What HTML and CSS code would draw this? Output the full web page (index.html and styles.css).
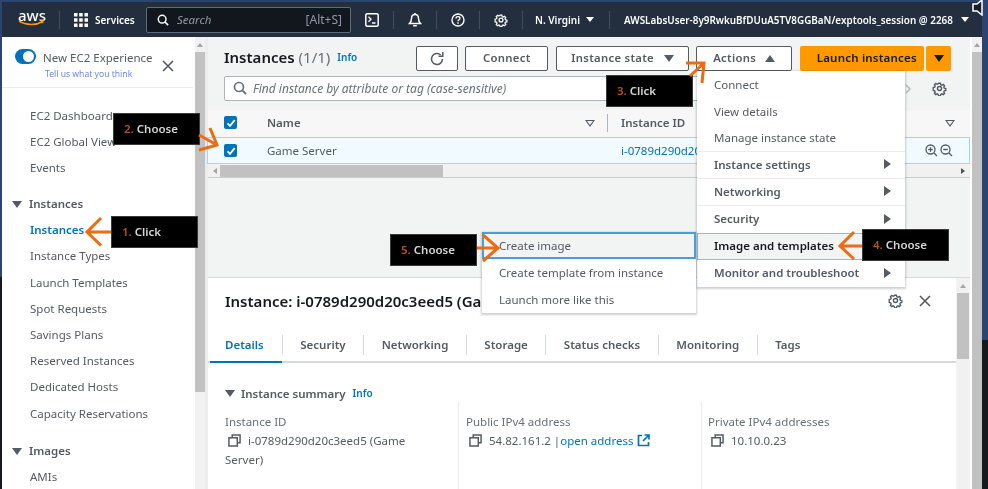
FILE: index.html
```html
<!DOCTYPE html>
<html lang="en">
<head>
    <meta charset="UTF-8" />
    <meta name="viewport" content="width=device-width, initial-scale=1" />
    <title>Instances | EC2 Management Console</title>
    <link rel="stylesheet" href="styles.css">
</head>
<body>
<svg class="defs" width="0" height="0">
    <symbol id="i-copy" viewBox="0 0 14 14"><path d="M4.5 3.5V1h8.500v8.500H10M1 4h9v9H1z" fill="none" stroke="currentColor" stroke-width="1.600"/></symbol>
    <symbol id="i-gear" viewBox="0 0 16 16"><path d="M6.700 1h2.600l.4 2 1.500.7 1.800-1.100 1.800 1.800-1.100 1.800.7 1.500 2 .4v2.600l-2 .4-.7 1.500 1.100 1.800-1.800 1.800-1.800-1.100-1.500.7-.4 2H6.700l-.4-2-1.500-.7-1.800 1.100-1.800-1.800 1.100-1.800-.7-1.500-2-.4V6.700l2-.4.7-1.500-1.100-1.800 1.800-1.800 1.800 1.100 1.500-.7z" transform="translate(1.600 1.600) scale(.8)" fill="none" stroke="currentColor" stroke-width="1.800"/><circle cx="8" cy="8" r="2.200" fill="none" stroke="currentColor" stroke-width="1.500"/></symbol>
    <symbol id="i-search" viewBox="0 0 14 14"><circle cx="6" cy="6" r="4.500" fill="none" stroke="currentColor" stroke-width="1.700"/><path d="M9.300 9.300 13 13" stroke="currentColor" stroke-width="1.900"/></symbol>
    <symbol id="i-x" viewBox="0 0 12 12"><path d="M1 1l10 10M11 1 1 11" stroke="currentColor" stroke-width="1.600"/></symbol>
    <symbol id="i-check" viewBox="0 0 12 12"><path d="M2.500 6.300 5 8.800l4.700-5.600" fill="none" stroke="#fff" stroke-width="1.800"/></symbol>
</svg>

<div class="page">
    <header class="topbar">
        <div class="aws-logo"><span>aws</span>
            <svg width="27" height="6" viewBox="0 0 27 6"><path d="M1 1c7 4.500 17 4.500 24 .5" fill="none" stroke="#f90" stroke-width="1.500"/><path d="M22 .5l4-.5-1 3.500z" fill="#f90"/></svg>
        </div>
        <span class="top-sep sep-logo"></span>
        <svg class="grid-icon" width="14" height="14" viewBox="0 0 14 14" fill="#fff"><path d="M0 0h3.500v3.500H0zM5.200 0h3.500v3.500H5.200zM10.500 0H14v3.500h-3.500zM0 5.200h3.500v3.500H0zM5.200 5.200h3.500v3.500H5.200zM10.500 5.200H14v3.500h-3.500zM0 10.500h3.500V14H0zM5.200 10.500h3.500V14H5.200zM10.500 10.500H14V14h-3.500z"/></svg>
        <span class="services">Services</span>
        <div class="top-search">
            <svg class="top-search-icon" width="12" height="12"><use href="#i-search"/></svg>
            <span class="top-search-text">Search</span>
            <span class="top-search-key">[Alt+S]</span>
        </div>
        <svg class="top-icon" width="14" height="14" viewBox="0 0 14 14"><rect x=".8" y=".8" width="12.400" height="12.400" rx="1.500" fill="none" stroke="#fff" stroke-width="1.500"/><path d="M3.500 3.800 6 6.300 3.500 8.800M7 10h3.500" fill="none" stroke="#fff" stroke-width="1.300"/></svg>
        <span class="top-sep"></span>
        <svg class="top-icon" width="14" height="14" viewBox="0 0 14 14"><path d="M7 1.500c-2.500 0-3.500 1.800-3.500 4 0 2.500-.7 3.700-2 5h11c-1.300-1.300-2-2.500-2-5 0-2.200-1-4-3.500-4z" fill="none" stroke="#fff" stroke-width="1.500"/><path d="M5.200 12h3.600v1.500H5.200zM6.200 0h1.600v2H6.200z" fill="#fff"/></svg>
        <span class="top-sep"></span>
        <svg class="top-icon" width="14" height="14" viewBox="0 0 14 14"><circle cx="7" cy="7" r="6" fill="none" stroke="#fff" stroke-width="1.400"/><path d="M5 5.400C5 4.200 5.900 3.600 7 3.600s2 .7 2 1.700c0 1.400-2 1.500-2 3" fill="none" stroke="#fff" stroke-width="1.300"/><path d="M6.300 9.300h1.400v1.400H6.300z" fill="#fff"/></svg>
        <span class="top-sep"></span>
        <svg class="top-icon top-gear" width="14" height="14"><use href="#i-gear"/></svg>
        <span class="top-sep"></span>
        <span class="region">N. Virgini</span><span class="caret-w"></span>
        <span class="top-sep sep-region"></span>
        <span class="account">AWSLabsUser-8y9RwkuBfDUuA5TV8GGBaN/exptools_session @ 2268</span><span class="caret-w"></span>
    </header>

    <div class="workspace">
        <aside class="sidebar">
            <div class="experience">
                <span class="toggle"></span>
                <div class="experience-text">
                    <div class="experience-title">New EC2 Experience</div>
                    <a class="experience-link">Tell us what you think</a>
                </div>
                <svg class="experience-close" width="12" height="12"><use href="#i-x"/></svg>
            </div>
            <nav class="nav">
                <a>EC2 Dashboard</a>
                <a>EC2 Global View</a>
                <a>Events</a>
                <div class="nav-head"><i class="tri-down"></i>Instances</div>
                <a class="active">Instances</a>
                <a>Instance Types</a>
                <a>Launch Templates</a>
                <a>Spot Requests</a>
                <a>Savings Plans</a>
                <a>Reserved Instances</a>
                <a>Dedicated Hosts</a>
                <a>Capacity Reservations</a>
                <div class="nav-head nav-head-images"><i class="tri-down"></i>Images</div>
                <a>AMIs</a>
            </nav>
        </aside>
        <div class="scrollbar side-scroll"><i class="scroll-up"></i><b></b></div>

        <main class="content">
            <section class="upper">
                <div class="title-row">
                    <h1>Instances <span class="count">(1/1)</span></h1>
                    <a class="info">Info</a>
                    <button class="btn btn-refresh"><svg width="16" height="16" viewBox="0 0 16 16"><path d="M13.500 8a5.500 5.500 0 1 1-1.800-4.100" fill="none" stroke="#545b64" stroke-width="1.500"/><path d="M13.800 1v4.200H9.600" fill="none" stroke="#545b64" stroke-width="1.500"/></svg></button>
                    <button class="btn btn-connect">Connect</button>
                    <button class="btn btn-state">Instance state <i class="tri-down big"></i></button>
                    <button class="btn btn-actions">Actions <i class="tri-up"></i></button>
                    <div class="launch">
                        <button class="launch-main">Launch instances</button>
                        <button class="launch-arrow"><i class="tri-down big dark"></i></button>
                    </div>
                </div>
                <div class="search-row">
                    <div class="find">
                        <svg width="14" height="14"><use href="#i-search"/></svg>
                        <span>Find instance by attribute or tag (case-sensitive)</span>
                    </div>
                    <svg class="pager" width="6" height="10" viewBox="0 0 6 10"><path d="M1 1l4 4-4 4" fill="none" stroke="#aab7b8" stroke-width="1.400"/></svg>
                    <svg class="search-gear" width="15" height="15"><use href="#i-gear"/></svg>
                </div>
                <div class="table">
                    <div class="table-head">
                        <span class="check"><svg width="12" height="12"><use href="#i-check"/></svg></span>
                        <span class="col-name">Name</span>
                        <i class="filter"></i>
                        <span class="col-id">Instance ID</span>
                        <i class="filter filter-end"></i>
                    </div>
                    <div class="table-row">
                        <span class="check"><svg width="12" height="12"><use href="#i-check"/></svg></span>
                        <span class="col-name">Game Server</span>
                        <a class="col-id-link">i-0789d290d20c3eed5</a>
                        <svg class="zoom-icons" width="28" height="13" viewBox="0 0 28 13"><g fill="none" stroke="#545b64" stroke-width="1.300"><circle cx="5.500" cy="5.500" r="4.500"/><path d="M9 9l3 3M3.300 5.500h4.400M5.500 3.300v4.400"/><circle cx="20.500" cy="5.500" r="4.500"/><path d="M24 9l3 3M18.300 5.500h4.400"/></g></svg>
                    </div>
                    <div class="h-scroll"><i class="scroll-left"></i><b></b><i class="scroll-right"></i></div>
                </div>
            </section>

            <div class="lower-wrap">
                <section class="lower">
                    <div class="lower-head">
                        <h2>Instance: i-0789d290d20c3eed5 (Game Server)</h2>
                        <svg class="lower-gear" width="15" height="15"><use href="#i-gear"/></svg>
                        <svg class="lower-close" width="12" height="12"><use href="#i-x"/></svg>
                    </div>
                    <div class="tabs">
                        <a class="tab selected">Details</a>
                        <a class="tab">Security</a>
                        <a class="tab">Networking</a>
                        <a class="tab">Storage</a>
                        <a class="tab">Status checks</a>
                        <a class="tab">Monitoring</a>
                        <a class="tab last">Tags</a>
                    </div>
                    <div class="summary-head"><i class="tri-down"></i>Instance summary <a class="info">Info</a></div>
                    <div class="summary">
                        <div class="field">
                            <label>Instance ID</label>
                            <p><svg class="copy" width="13" height="13"><use href="#i-copy"/></svg>i-0789d290d20c3eed5 (Game Server)</p>
                        </div>
                        <div class="field">
                            <label>Public IPv4 address</label>
                            <p><svg class="copy" width="13" height="13"><use href="#i-copy"/></svg>54.82.161.2 |<a class="link">open address</a>
                                <svg class="ext" width="13" height="13" viewBox="0 0 13 13"><path d="M5 1.500H1.500v10h10V8M7.500 1H12v4.500M12 1 6 7" fill="none" stroke="#0073bb" stroke-width="1.700"/></svg></p>
                        </div>
                        <div class="field">
                            <label>Private IPv4 addresses</label>
                            <p><svg class="copy" width="13" height="13"><use href="#i-copy"/></svg>10.10.0.23</p>
                        </div>
                        <div class="field field-next"><label>IPv6 address</label></div>
                        <div class="field field-next"><label>Instance state</label></div>
                        <div class="field field-next"><label>Public IPv4 DNS</label></div>
                    </div>
                </section>
                <div class="scrollbar lower-scroll"><i class="scroll-up"></i><b></b></div>
            </div>
        </main>
        <div class="scrollbar main-scroll"><i class="scroll-up"></i><b></b></div>
    </div>

    <!-- actions menu -->
    <div class="menu actions-menu">
        <a>Connect</a>
        <a>View details</a>
        <a class="rule-after">Manage instance state</a>
        <a class="strong rule-after">Instance settings<i class="tri-right"></i></a>
        <a class="strong rule-after">Networking<i class="tri-right"></i></a>
        <a class="strong">Security<i class="tri-right"></i></a>
        <a class="strong picked">Image and templates<i class="tri-right"></i></a>
        <a class="strong">Monitor and troubleshoot<i class="tri-right"></i></a>
    </div>
    <div class="menu image-menu">
        <a class="focused">Create image</a>
        <a>Create template from instance</a>
        <a>Launch more like this</a>
    </div>

    <!-- walkthrough callouts -->
    <div class="callout step-1"><em>1.</em> Click</div>
    <div class="callout step-2"><em>2.</em> Choose</div>
    <div class="callout step-3"><em>3.</em> Click</div>
    <div class="callout step-4"><em>4.</em> Choose</div>
    <div class="callout step-5"><em>5.</em> Choose</div>
    <svg class="arrows" width="988" height="489" viewBox="0 0 988 489" fill="none" stroke="#ee6b10" stroke-width="3">
        <path d="M111 232H88M101 218 87 232l14 13.500"/>
        <path d="M199 135l18 10M210 128l7 17-18 5"/>
        <path d="M686 63h18l-2 20M704 63 690 76"/>
        <path d="M862 246h-21M854 232l-14 14 14 13"/>
        <path d="M477 248h20M483 235l15 13-15 13"/>
    </svg>
    <svg class="speaker" width="16" height="16" viewBox="0 0 16 16"><path d="M1 4h4l5-4v15L5 11H1z" fill="#15202b" stroke="#fff" stroke-width="1.500"/></svg>
</div>
</body>
</html>
```

FILE: styles.css
```css
* {
    box-sizing: border-box;
}

html, body {
    margin: 0;
    height: 100%;
    overflow: hidden;
}

body {
    font-family: "Noto Sans", Arial, sans-serif;
    font-size: 11.500px;
    color: #545b64;
    background: #2b4570;
}

h1, h2, p {
    margin: 0;
}

a {
    text-decoration: none;
}

i {
    display: inline-block;
}

.defs {
    position: absolute;
}

.page {
    position: relative;
    width: 988px;
    height: 489px;
    padding: 2px 6px 0 2px;
    overflow: hidden;
    filter: blur(0.45px);
    background:
        linear-gradient(#2b4570 277px, #15181c 277px) left / 2px 100% no-repeat,
        linear-gradient(#2b4570 340px, #15181c 340px) right / 6px 100% no-repeat,
        #2b4570;
}

/* triangles */
.tri-down {
    width: 0;
    height: 0;
    border-left: 5px solid transparent;
    border-right: 5px solid transparent;
    border-top: 7px solid #545b64;
}

.tri-up {
    width: 0;
    height: 0;
    border-left: 5px solid transparent;
    border-right: 5px solid transparent;
    border-bottom: 7px solid #545b64;
}

.tri-down.dark {
    border-top-color: #16191f;
}

.tri-right {
    width: 0;
    height: 0;
    border-top: 5px solid transparent;
    border-bottom: 5px solid transparent;
    border-left: 7px solid #545b64;
    margin-left: auto;
}

/* top bar */
.topbar {
    display: flex;
    align-items: center;
    height: 35px;
    background: #232f3e;
    color: #fff;
    font-size: 10px;
    font-weight: 600;
    padding-left: 16px;
}

.aws-logo {
    width: 27px;
    line-height: 9px;
    font-size: 15px;
    font-weight: 500;
    text-align: center;
    margin-top: -3px;
}

.aws-logo svg {
    display: block;
}

.top-sep {
    width: 1px;
    height: 18px;
    background: #414d5c;
    margin: 0 14px;
}

.services {
    margin-left: 7px;
    width: 51px;
}

.top-search {
    display: flex;
    align-items: center;
    width: 205px;
    height: 26px;
    background: #12171e;
    border: 1px solid #5f6b7a;
    border-radius: 2px;
    padding: 0 8px 0 10px;
    margin-right: 14px;
    color: #8d99a8;
    font-weight: 400;
    font-size: 11.500px;
}

.top-search-icon {
    color: #fff;
}

.top-search-text {
    font-style: italic;
    margin-left: 8px;
}

.top-search-key {
    margin-left: auto;
    font-size: 12px;
}

.region {
    margin-left: -2px;
}

.caret-w {
    width: 0;
    height: 0;
    border-left: 4px solid transparent;
    border-right: 4px solid transparent;
    border-top: 5px solid #fff;
    margin-left: 6px;
}

.sep-region {
    margin: 0 14px 0 15px;
}

.account {
    white-space: nowrap;
    width: 331px;
    font-size: 9.900px;
}

/* main areas */
.workspace {
    display: flex;
    height: 452px;
    background: #fff;
}

.sidebar {
    width: 191px;
    flex: none;
    background: #fff;
}

.experience {
    position: relative;
    display: flex;
    height: 51px;
    padding: 13px 0 0 13px;
    border-bottom: 1px solid #eaeded;
}

.toggle {
    position: relative;
    width: 21px;
    height: 15px;
    margin-top: -1px;
    border-radius: 8px;
    background: #0073bb;
}

.toggle::after {
    content: "";
    position: absolute;
    right: 2px;
    top: 2px;
    width: 11px;
    height: 11px;
    border-radius: 50%;
    background: #fff;
}

.experience-text {
    margin-left: 7px;
}

.experience-title {
    line-height: 16px;
    white-space: nowrap;
}

.experience-link {
    display: block;
    font-size: 8.600px;
    line-height: 14px;
    margin: 1px 0 0 2px;
    color: #6b8ae0;
    white-space: nowrap;
}

.experience-close {
    position: absolute;
    left: 160px;
    top: 23px;
    color: #545b64;
}

.nav {
    padding-top: 15px;
}

.nav a,
.nav-head {
    display: block;
    line-height: 26.200px;
    height: 26.200px;
    padding-left: 28px;
    white-space: nowrap;
}

.nav a.active {
    color: #0073bb;
    font-weight: 600;
}

.nav-head {
    position: relative;
    margin-top: 9.500px;
    padding-left: 27px;
    font-weight: 600;
}

.nav-head-images {
    margin-top: 11.500px;
}

.nav-head .tri-down {
    position: absolute;
    left: 10px;
    top: 10px;
}

.scrollbar {
    position: relative;
    flex: none;
    width: 10px;
    background: #f1f1f1;
}

.scrollbar b {
    position: absolute;
    left: 0;
    right: 0;
    top: 15px;
    background: #c1c1c1;
}

.scroll-up {
    position: absolute;
    left: 2px;
    top: 6px;
    width: 0;
    height: 0;
    border-left: 3px solid transparent;
    border-right: 3px solid transparent;
    border-bottom: 4px solid #a3a3a3;
}

.side-scroll {
    margin-left: 2px;
}

.side-scroll b {
    height: 340px;
}

.content {
    flex: 1;
    min-width: 0;
    display: flex;
    flex-direction: column;
    margin-left: 3px;
    background: #f2f3f3;
    box-shadow: -3px 0 0 #ececec;
}

.main-scroll {
    margin-left: 2px;
    width: 10px;
}

.main-scroll b {
    bottom: 0;
}

.upper {
    height: 241px;
    flex: none;
    background: #f2f3f3;
    border-bottom: 1px solid #d5dbdb;
}

.title-row {
    display: flex;
    align-items: center;
    height: 25px;
    margin-top: 9px;
    padding-left: 16px;
}

h1 {
    font-size: 15px;
    font-weight: 600;
    color: #16191f;
    white-space: nowrap;
    margin-top: -3px;
}

.count {
    font-weight: 400;
    color: #687078;
}

.info {
    color: #0073bb;
    font-size: 10px;
    font-weight: 600;
    margin-left: 7px;
}

.title-row .info {
    margin-top: -3px;
}

.btn {
    height: 25px;
    background: #fff;
    border: 1px solid #545b64;
    border-radius: 2px;
    font: 600 11.300px "Noto Sans", Arial, sans-serif;
    color: #545b64;
    letter-spacing: 0.3px;
    padding: 0 0 2px;
}

.btn-refresh {
    width: 42px;
    margin-left: 59px;
    display: flex;
    align-items: center;
    justify-content: center;
    padding: 0;
}

.btn-connect {
    width: 83px;
    margin-left: 7px;
}

.btn-state {
    width: 133px;
    margin-left: 8px;
}

.btn-state .tri-down {
    margin-left: 7px;
}

.btn-actions {
    width: 96px;
    margin-left: 7px;
}

.btn-actions .tri-up {
    margin-left: 6px;
}

.launch {
    display: flex;
    margin-left: 8px;
    gap: 2px;
}

.launch button {
    height: 25px;
    border: 0;
    border-radius: 2px;
    background: #f90;
    padding: 0 0 2px;
    color: #16191f;
    font: 600 11.500px "Noto Sans", Arial, sans-serif;
}

.launch .launch-main {
    width: 124px;
    padding-left: 9px;
    letter-spacing: 0.2px;
}

.launch-arrow {
    width: 25px;
}

.search-row {
    display: flex;
    align-items: center;
    height: 25px;
    margin-top: 5px;
    padding-left: 16px;
}

.find {
    display: flex;
    align-items: center;
    width: 675px;
    height: 25px;
    background: #fff;
    border: 1px solid #aab7b8;
    border-radius: 2px;
    padding: 0 0 1px 8px;
    color: #687078;
    font-size: 12px;
}

.find span {
    font-style: italic;
    margin-left: 6px;
}

.pager {
    margin-left: 6px;
}

.search-gear {
    margin-left: 21px;
}

.table {
    margin-top: 9px;
}

.table-head,
.table-row {
    position: relative;
    display: flex;
    align-items: center;
    height: 27px;
    font-weight: 600;
    background: #f7f7f7;
}

.table-head {
    padding-bottom: 2px;
}

.table-row {
    background: #f1faff;
    font-weight: 400;
    border: 1px solid #a9d3ee;
    margin-left: -1px;
    padding-bottom: 0;
}

.check {
    display: flex;
    align-items: center;
    justify-content: center;
    width: 13px;
    height: 13px;
    margin-left: 16px;
    border-radius: 2px;
    background: #0073bb;
}

.col-name {
    margin-left: 30px;
}

.filter {
    position: absolute;
    top: 10px;
    left: 377px;
    width: 0;
    height: 0;
    border-left: 5px solid transparent;
    border-right: 5px solid transparent;
    border-top: 7px solid #545b64;
}

.filter::after {
    content: "";
    position: absolute;
    left: -3px;
    top: -6px;
    width: 0;
    height: 0;
    border-left: 3px solid transparent;
    border-right: 3px solid transparent;
    border-top: 4px solid #f7f7f7;
}

.filter-end {
    left: 737px;
}

.col-id {
    position: absolute;
    left: 399px;
    padding-left: 13px;
    line-height: 18px;
    border-left: 1px solid #aab7b8;
}

.col-id-link {
    position: absolute;
    left: 413px;
    color: #0073bb;
    white-space: nowrap;
}

.zoom-icons {
    position: absolute;
    left: 717px;
    top: 6px;
}

.h-scroll {
    position: relative;
    height: 13px;
    margin-top: 1px;
    border-bottom: 1px solid #c8cdcd;
    background: #f1f1f1;
}

.h-scroll b {
    position: absolute;
    left: 12px;
    width: 223px;
    top: 0;
    height: 12px;
    background: #c1c1c1;
}

.scroll-left,
.scroll-right {
    position: absolute;
    top: 3px;
    width: 0;
    height: 0;
    border-top: 3px solid transparent;
    border-bottom: 3px solid transparent;
}

.scroll-left {
    left: 5px;
    border-right: 4px solid #a3a3a3;
}

.scroll-right {
    right: 5px;
    border-left: 4px solid #505050;
}

.lower-wrap {
    display: flex;
    flex: 1;
    min-height: 0;
}

.lower {
    flex: 1;
    min-width: 0;
    background: #fff;
    overflow: hidden;
}

.lower-scroll {
    width: 12px;
    margin: 0 1px;
    background: #f1f1f1;
}

.lower-scroll b {
    height: 66px;
}

.lower-scroll .scroll-up {
    left: 3px;
}

.lower-head {
    position: relative;
    height: 47px;
    padding: 13px 0 0 17px;
}

h2 {
    font-size: 15px;
    font-weight: 600;
    line-height: 20px;
    color: #16191f;
    white-space: nowrap;
}

.lower-gear {
    position: absolute;
    left: 680px;
    top: 15px;
}

.lower-close {
    position: absolute;
    left: 711px;
    top: 17px;
}

.tabs {
    display: flex;
    align-items: center;
    height: 38px;
    padding-top: 4px;
    border-bottom: 2px solid #d5dbdb;
    font-weight: 600;
}

.tab {
    padding: 0 17.500px;
    line-height: 20px;
    color: #545b64;
    border-right: 1px solid #d5dbdb;
    white-space: nowrap;
}

.tab.selected {
    position: relative;
    padding: 0 18px 0 17px;
    color: #0073bb;
}

.tab.last {
    border-right: 0;
}

.tab.selected::after {
    content: "";
    position: absolute;
    left: 2px;
    right: 0;
    bottom: -8px;
    height: 2px;
    background: #0073bb;
}

.summary-head {
    display: flex;
    align-items: center;
    margin: 21px 0 0 17px;
    height: 18px;
    font-weight: 600;
    white-space: nowrap;
}

.summary-head .tri-down {
    margin-right: 6px;
}

.summary-head .info {
    margin-left: 7px;
}

.summary {
    display: grid;
    grid-template-columns: 234px 243px 1fr;
    margin-left: 17px;
}

.field {
    padding: 10px 30px 0 0;
    border-right: 1px solid #eaeded;
    line-height: 19px;
    color: #687078;
    min-height: 76px;
}

.field:nth-child(n+2) {
    padding-left: 7px;
}

.field:nth-child(3n) {
    border-right: 0;
    padding-left: 6px;
}

.field p {
    color: #545b64;
}

.field label {
    display: block;
}

.copy {
    margin: 0 7px 0 3px;
    vertical-align: -2px;
    color: #545b64;
}

.link {
    color: #0073bb;
}

.ext {
    vertical-align: -2px;
    margin-left: 1px;
}

/* floating pieces */
.menu {
    position: absolute;
    background: #fff;
    box-shadow: 0 1px 2px 1px rgba(0, 22, 32, 0.2);
}

.menu a {
    display: flex;
    align-items: center;
    height: 27px;
    padding: 0 14px 1px 17px;
    white-space: nowrap;
}

.menu a.strong {
    padding-bottom: 2px;
    font-weight: 600;
}

.menu .rule-after {
    border-bottom: 1px solid #eaeded;
}

.menu a.picked {
    background: #f2f3f3;
    color: #16191f;
    box-shadow: inset 0 0 0 1px #aab7b8;
}

.actions-menu {
    left: 697px;
    top: 71px;
    width: 208px;
}

.image-menu {
    left: 482px;
    top: 232px;
    width: 214px;
}

.image-menu a.focused {
    background: #f2f3f3;
    box-shadow: inset 0 0 0 2px #44a0d8;
}

.callout {
    position: absolute;
    width: 87px;
    height: 32px;
    padding-left: 10px;
    line-height: 29px;
    background: #000;
    border: 1px solid #3a3a3a;
    color: #d4d4d4;
    font-weight: 600;
    white-space: nowrap;
}

.callout em {
    font-style: normal;
    color: #b4520f;
}

.step-1 { left: 111px; top: 216px; }
.step-2 { left: 113px; top: 113px; }
.step-3 { left: 606px; top: 75px; }
.step-4 { left: 862px; top: 229px; }
.step-5 { left: 390px; top: 234px; }

.arrows {
    position: absolute;
    left: 0;
    top: 0;
    pointer-events: none;
}

.speaker {
    position: absolute;
    left: 972px;
    top: 0;
}
```
